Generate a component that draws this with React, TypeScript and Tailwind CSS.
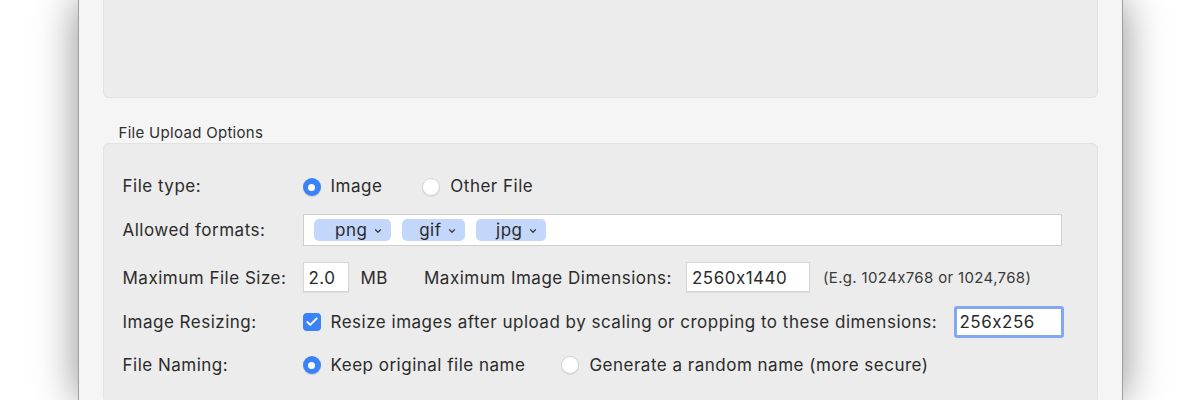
import { ChevronDown, Check } from 'lucide-react';

const font = { fontFamily: 'Inter, "Liberation Sans", Arial, sans-serif' };

function Radio({ checked }: { checked: boolean }) {
  return checked ? (
    <span className="w-[18px] h-[18px] rounded-full bg-[#3a82f7] flex items-center justify-center shrink-0 shadow-[0_1px_1px_rgba(0,0,0,0.15)]">
      <span className="w-[7px] h-[7px] rounded-full bg-white" />
    </span>
  ) : (
    <span className="w-[18px] h-[18px] rounded-full bg-white border border-[#d4d4d4] shrink-0 shadow-[0_1px_1px_rgba(0,0,0,0.08)]" />
  );
}

function Pill({ label, w }: { label: string; w: string }) {
  return (
    <span className={`h-[22px] ${w} rounded-[5px] bg-[#c3d7fb] flex items-center justify-end pr-[8px] gap-[5px] pt-[2px] text-[#2a2a2a]`}>
      {label}
      <ChevronDown size={10} strokeWidth={3} className="text-[#3a3a3a] -mt-[1px]" />
    </span>
  );
}

export default function App() {
  return (
    <div className="w-[1200px] h-[400px] bg-white overflow-hidden flex justify-center" style={font}>
      <div className="w-[1045px] h-full bg-[#f5f5f5] border-x border-[#a0a0a0] shadow-[0_0_40px_rgba(0,0,0,0.45)] px-[24px] text-[#2b2b2b]">
        <div className="h-[98px] rounded-b-[6px] bg-[#ececec] border-x border-b border-[#e2e2e2]" />
        <div className="pl-[16px] pt-[24px] h-[45px] text-[15px] tracking-[0.3px] text-[#2f2f2f]">File Upload Options</div>
        <div className="h-[260px] rounded-[6px] bg-[#ececec] border border-[#e2e2e2] pl-[19px] pt-[28px] text-[17px] tracking-[0.5px]">
          {/* File type */}
          <div className="h-[30px] flex items-center">
            <div className="w-[180px]">File type:</div>
            <div className="flex items-center gap-[10px]">
              <Radio checked />
              <span>Image</span>
            </div>
            <div className="flex items-center gap-[10px] ml-[40px]">
              <Radio checked={false} />
              <span>Other File</span>
            </div>
          </div>

          {/* Allowed formats */}
          <div className="h-[32px] mt-[12px] flex items-center">
            <div className="w-[180px] pt-[2px]">Allowed formats:</div>
            <div className="w-[759px] h-[32px] bg-white border border-[#cfcfcf] flex items-center gap-[11px] pl-[10px]">
              <Pill label="png" w="w-[77px]" />
              <Pill label="gif" w="w-[63px]" />
              <Pill label="jpg" w="w-[70px]" />
            </div>
          </div>

          {/* Sizes */}
          <div className="h-[30px] mt-[16px] flex items-center">
            <div className="w-[180px] pt-[3px]">Maximum File Size:</div>
            <div className="w-[46px] h-[30px] bg-white border border-[#d6d6d6] shadow-[0_1px_1px_rgba(0,0,0,0.06)] flex items-center pl-[5px] pt-[3px]">2.0</div>
            <span className="ml-[12px] pt-[3px]">MB</span>
            <span className="ml-[36px] pt-[3px]">Maximum Image Dimensions:</span>
            <div className="ml-[14px] w-[124px] h-[30px] bg-white border border-[#d6d6d6] shadow-[0_1px_1px_rgba(0,0,0,0.06)] flex items-center pl-[5px] pt-[3px]">2560x1440</div>
            <span className="ml-[13px] pt-[3px] text-[15px] tracking-[0.35px] text-[#3a3a3a]">(E.g. 1024x768 or 1024,768)</span>
          </div>

          {/* Resizing */}
          <div className="h-[32px] mt-[14px] flex items-center">
            <div className="w-[180px] pt-[1px]">Image Resizing:</div>
            <span className="w-[18px] h-[18px] rounded-[4px] bg-[#3a82f7] flex items-center justify-center shrink-0">
              <Check size={14} strokeWidth={3.2} className="text-white" />
            </span>
            <span className="ml-[10px] pt-[1px]">Resize images after upload by scaling or cropping to these dimensions:</span>
            <div className="ml-auto mr-[33px] w-[110px] h-[32px] rounded-[3px] bg-white border-[3px] border-[#84a7f4] flex items-center pl-[3px] pt-[1px]">256x256</div>
          </div>

          {/* Naming */}
          <div className="h-[30px] mt-[12px] flex items-center">
            <div className="w-[180px] pt-[2px]">File Naming:</div>
            <div className="flex items-center gap-[10px]">
              <Radio checked />
              <span className="pt-[2px]">Keep original file name</span>
            </div>
            <div className="flex items-center gap-[10px] ml-[36px]">
              <Radio checked={false} />
              <span className="pt-[2px]">Generate a random name (more secure)</span>
            </div>
          </div>
        </div>
      </div>
    </div>
  );
}
